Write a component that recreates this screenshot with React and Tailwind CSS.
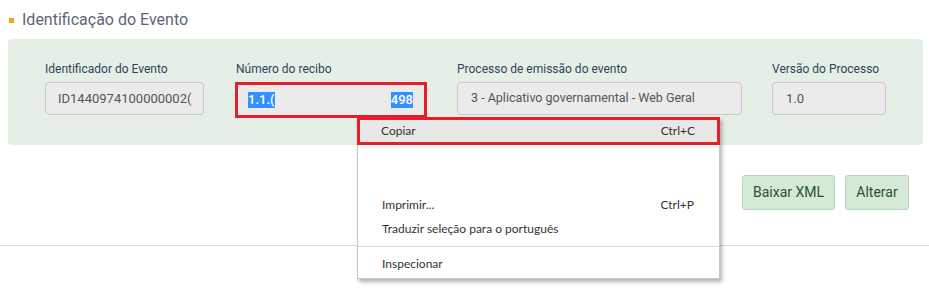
import React from 'react';

const Field = ({ label, width, children }) => (
  <div className="flex flex-col" style={{ width }}>
    <span className="text-[12px] leading-4 text-[#2c4460] whitespace-nowrap">{label}</span>
    <div className="mt-[5px]">{children}</div>
  </div>
);

const MenuRow = ({ label, shortcut }) => (
  <div className="flex h-6 items-center justify-between pl-6 pr-[25px] text-[12px] text-[#333]">
    <span>{label}</span>
    {shortcut && <span>{shortcut}</span>}
  </div>
);

const App = () => {
  return (
    <div className="relative h-[288px] w-[929px] overflow-hidden bg-white font-['Roboto',sans-serif]">
      <div className="flex items-center gap-[8px] pl-[9px] pt-[10px]">
        <span className="h-[5px] w-[5px] bg-[#f5a623]" />
        <h1 className="text-[16px] leading-5 text-[#5d6577]">Identificação do Evento</h1>
      </div>

      <div className="ml-2 mr-[6px] mt-[9px] h-[106px] rounded-[4px] bg-[#e5efe6] pl-[37px] pt-[22px]">
        <div className="flex">
          <Field label="Identificador do Evento" width={159}>
            <div className="flex h-[33px] items-center overflow-hidden whitespace-nowrap rounded-[4px] border border-[#c9c9c9] bg-[#ebebeb] px-3 text-[13px] text-[#555]">
              ID1440974100000002(
            </div>
          </Field>
          <div className="w-8" />
          <Field label="Número do recibo" width={192}>
            <div className="-ml-[1px] flex h-[36px] w-[192px] items-center border-[3px] border-[#e41f2b] bg-[#ebebeb] pl-[10px] pr-[11px] text-[13px] font-medium text-white">
              <span className="bg-[#3391ff] leading-4">1.1.(</span>
              <span className="flex-1" />
              <span className="bg-[#3391ff] leading-4">498</span>
            </div>
          </Field>
          <div className="w-[29px]" />
          <Field label="Processo de emissão do evento" width={285}>
            <div className="flex h-[33px] items-center rounded-[4px] border border-[#c9c9c9] bg-[#ebebeb] px-[13px] text-[12.5px] text-[#555]">
              3 - Aplicativo governamental - Web Geral
            </div>
          </Field>
          <div className="w-[30px]" />
          <Field label="Versão do Processo" width={114}>
            <div className="flex h-[33px] items-center rounded-[4px] border border-[#c9c9c9] bg-[#ebebeb] px-[13px] text-[13px] text-[#555]">
              1.0
            </div>
          </Field>
        </div>
      </div>

      <div className="mr-5 mt-[30px] flex justify-end gap-[10px]">
        <button className="h-[35px] w-[93px] rounded-[3px] border border-[#b8d6bb] bg-[#d4ead6] text-[14px] text-[#2f5037]">
          Baixar XML
        </button>
        <button className="h-[35px] w-[64px] rounded-[3px] border border-[#b8d6bb] bg-[#d4ead6] text-[14px] text-[#2f5037]">
          Alterar
        </button>
      </div>

      <div className="mt-[35px] border-t border-[#dcdcdc]" />

      <div className="absolute left-[357px] top-[117px] w-[363px] border border-[#c8c8c8] bg-white pb-[2px] font-['Lato',sans-serif] shadow-[2px_3px_4px_rgba(0,0,0,0.3)]">
        <div className="-mx-px -mt-px flex h-[28px] items-center justify-between border-[3px] border-[#e41f2b] bg-[#e8e8e8] pl-[21px] pr-[22px] text-[12px] text-[#333]">
          <span>Copiar</span>
          <span>Ctrl+C</span>
        </div>
        <div className="h-12" />
        <MenuRow label="Imprimir..." shortcut="Ctrl+P" />
        <MenuRow label="Traduzir seleção para o português" />
        <div className="py-[5px]">
          <div className="border-t border-[#d9d9d9]" />
        </div>
        <MenuRow label="Inspecionar" />
      </div>
    </div>
  );
};

export default App;
